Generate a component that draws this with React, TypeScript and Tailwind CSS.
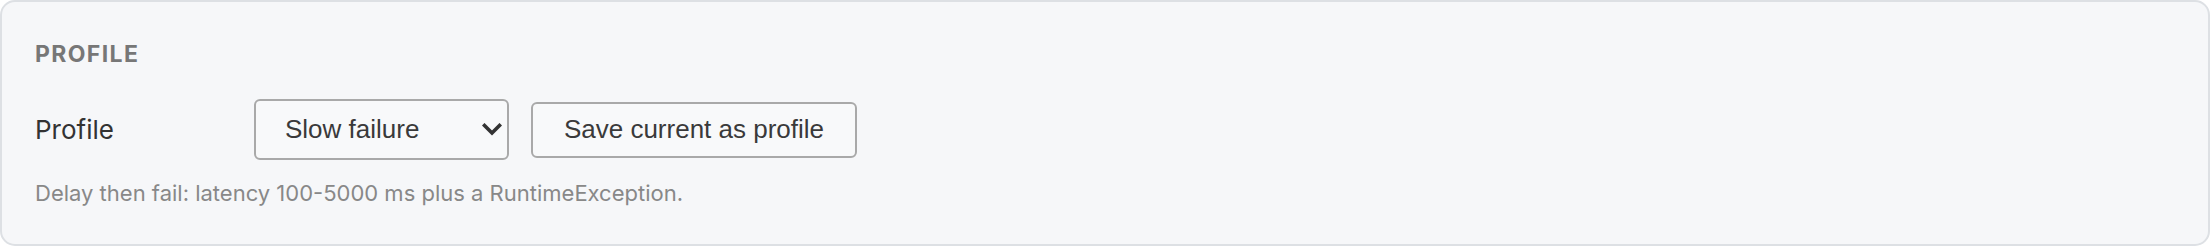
import React, { useState } from 'react';

const profiles = ['No fault', 'Slow response', 'Slow failure', 'Fast failure'];

export default function App() {
  const [profile, setProfile] = useState<string>('Slow failure');

  return (
    <div className="w-full h-[246px] bg-white">
      <div className="h-full rounded-[15px] border-2 border-[#dde0e4] bg-[#f6f7f9] px-[33px] pt-[41px] font-['Inter',sans-serif]">
        <h2 className="text-[23px] leading-none font-bold tracking-[0.06em] text-[#777777]">PROFILE</h2>

        <div className="flex items-center mt-[33px]">
          <label className="w-[219px] shrink-0 text-[26px] leading-none text-[#333333]">Profile</label>

          <div className="relative w-[255px] h-[61px] shrink-0">
            <select
              value={profile}
              onChange={(e) => setProfile(e.target.value)}
              className="appearance-none w-full h-full rounded-[6px] border-2 border-[#a9a9a9] bg-[#f8f9fa] pl-[29px] pr-[40px] text-[26px] text-[#3a3a3a] font-['Liberation_Sans',Arial,sans-serif] outline-none"
            >
              {profiles.map((p) => (
                <option key={p} value={p}>
                  {p}
                </option>
              ))}
            </select>
            {/* chevron */}
            <svg
              className="pointer-events-none absolute right-[7px] top-[24px]"
              width="20"
              height="13"
              viewBox="0 0 20 13"
              fill="none"
            >
              <path d="M2.5 2.5 L10 10 L17.5 2.5" stroke="#333333" strokeWidth="3.6" strokeLinecap="square" />
            </svg>
          </div>

          <button className="ml-[22px] w-[326px] h-[56px] shrink-0 rounded-[6px] border-2 border-[#a9a9a9] bg-[#f8f9fa] text-[26px] text-[#3a3a3a] font-['Liberation_Sans',Arial,sans-serif]">
            Save current as profile
          </button>
        </div>

        <p className="mt-[22px] text-[22px] leading-none text-[#888888]">
          Delay then fail: latency 100-5000 ms plus a RuntimeException.
        </p>
      </div>
    </div>
  );
}
